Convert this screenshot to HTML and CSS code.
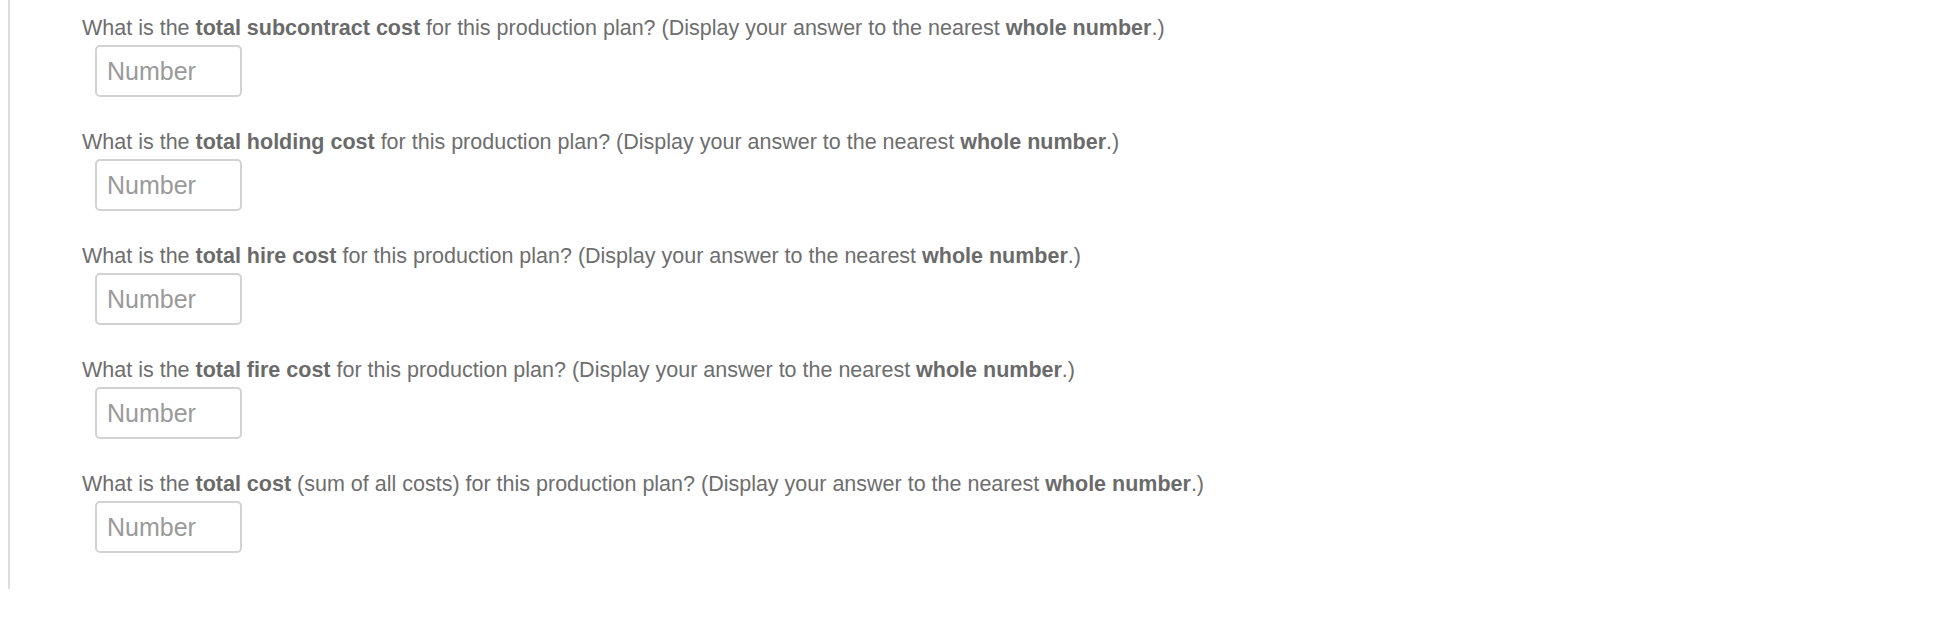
FILE: index.html
```html
<!DOCTYPE html>
<html lang="en">
<head>
  <meta charset="UTF-8">
  <meta name="viewport" content="width=device-width, initial-scale=1.0">
  <title>Production plan costs</title>
  <link rel="stylesheet" href="styles.css">
</head>
<body>
  <div class="panel">
    <div class="question">
      <p>What is the <b>total subcontract cost</b> for this production plan? (Display your answer to the nearest <b>whole number</b>.)</p>
      <input type="text" class="answer" placeholder="Number">
    </div>

    <div class="question">
      <p>What is the <b>total holding cost</b> for this production plan? (Display your answer to the nearest <b>whole number</b>.)</p>
      <input type="text" class="answer" placeholder="Number">
    </div>

    <div class="question">
      <p>What is the <b>total hire cost</b> for this production plan? (Display your answer to the nearest <b>whole number</b>.)</p>
      <input type="text" class="answer" placeholder="Number">
    </div>

    <div class="question">
      <p>What is the <b>total fire cost</b> for this production plan? (Display your answer to the nearest <b>whole number</b>.)</p>
      <input type="text" class="answer" placeholder="Number">
    </div>

    <div class="question">
      <p>What is the <b>total cost</b> (sum of all costs) for this production plan? (Display your answer to the nearest <b>whole number</b>.)</p>
      <input type="text" class="answer" placeholder="Number">
    </div>
  </div>
</body>
</html>
```

FILE: styles.css
```css
body {
  margin: 0;
  padding: 0;
  font-family: "Liberation Sans", Arial, sans-serif;
  background-color: #ffffff;
  color: #6e6e6e;
}

.panel {
  margin-left: 8px;
  border-left: 2px solid #dddddd;
  padding: 16px 0 36px 72px;
}

.question {
  margin-bottom: 33px;
}

.question:last-child {
  margin-bottom: 0;
}

.question p {
  margin: 0;
  font-size: 21.5px;
  line-height: 24px;
}

.question b {
  color: #6a6a6a;
}

.answer {
  display: block;
  box-sizing: border-box;
  width: 147px;
  height: 52px;
  margin: 5px 0 0 13px;
  padding: 0 10px;
  border: 2px solid #d2d2d2;
  border-radius: 5px;
  font-family: "Liberation Sans", Arial, sans-serif;
  font-size: 25px;
  color: #6e6e6e;
  outline: none;
}

.answer::placeholder {
  color: #9a9a9a;
}
```
